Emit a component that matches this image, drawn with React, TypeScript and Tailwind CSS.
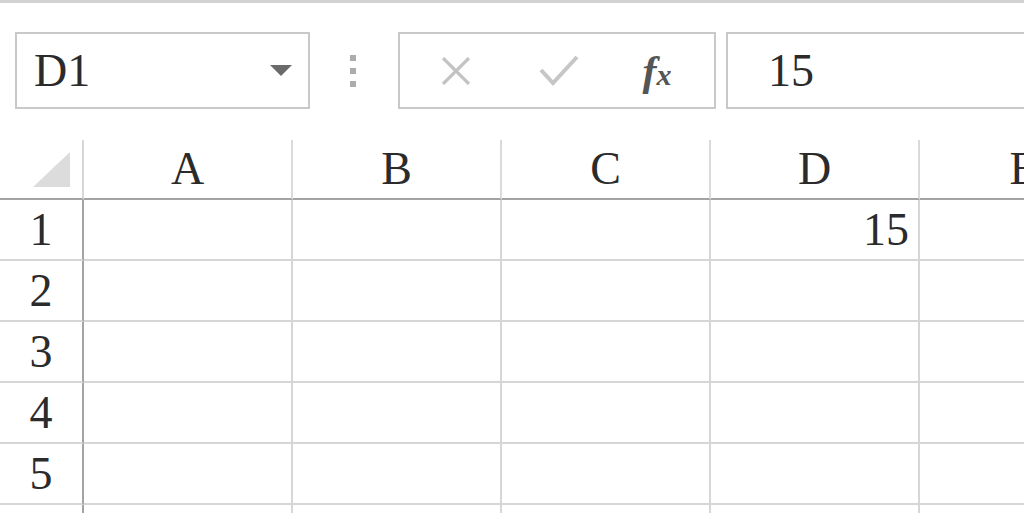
import React from 'react';

const serif = { fontFamily: '"Liberation Serif", "Times New Roman", serif' };

const columns = ['A', 'B', 'C', 'D', 'E'];
const rows = [1, 2, 3, 4, 5, 6];

const values: Record<string, string> = { D1: '15' };

const NameBox = () => (
  <div className="w-[295px] h-[77px] shrink-0 border-2 border-[#c9c9c9] flex items-center pl-[17px] pr-[16px] justify-between">
    <span className="text-[46px] leading-none text-[#2b2b2b]">D1</span>
    <svg width="22" height="11" viewBox="0 0 22 11">
      <polygon points="0,0 22,0 11,11" fill="#6b6b6b" />
    </svg>
  </div>
);

const Grip = () => (
  <div className="w-[88px] h-[77px] shrink-0 flex flex-col items-center justify-center gap-[7px] pr-[2px]">
    <span className="w-[6px] h-[6px] bg-[#acacac]" />
    <span className="w-[6px] h-[6px] bg-[#acacac]" />
    <span className="w-[6px] h-[6px] bg-[#acacac]" />
  </div>
);

const FormulaButtons = () => (
  <div className="w-[318px] h-[77px] shrink-0 border-2 border-[#c9c9c9] flex items-center">
    <div className="w-[105px] flex justify-center pl-[6px]">
      <svg width="30" height="28" viewBox="0 0 30 28">
        <path d="M2 1 L28 27 M28 1 L2 27" stroke="#c3c3c3" strokeWidth="3.2" fill="none" />
      </svg>
    </div>
    <div className="w-[105px] flex justify-center pl-[2px]">
      <svg width="40" height="31" viewBox="0 0 40 31">
        <path d="M2 15 L14 28 L38 2" stroke="#c6c6c6" strokeWidth="4" fill="none" />
      </svg>
    </div>
    <div className="flex-1 flex justify-center pr-[10px]">
      <span className="italic font-bold text-[42px] leading-none text-[#555]">
        f<span className="text-[30px]">x</span>
      </span>
    </div>
  </div>
);

const FormulaInput = () => (
  <div className="w-[420px] h-[77px] shrink-0 border-2 border-[#c9c9c9] flex items-center pl-[40px]">
    <span className="text-[46px] leading-none text-[#2b2b2b]">15</span>
  </div>
);

export default function App() {
  return (
    <div className="w-[1024px] h-[513px] overflow-hidden bg-white" style={serif}>
      <div className="h-[3px] bg-[#d2d2d2]" />

      <div className="h-[137px] pt-[29px] pl-[15px] flex items-start">
        <NameBox />
        <Grip />
        <FormulaButtons />
        <div className="w-[10px] shrink-0" />
        <FormulaInput />
      </div>

      <div className="grid grid-cols-[84px_209px_209px_209px_209px_209px] text-[#2b2b2b]">
        <div className="h-[60px] border-r-2 border-b-2 border-r-[#d6d6d6] border-b-[#a3a3a3] flex items-end justify-end pr-[12px] pb-[11px]">
          <svg width="37" height="35" viewBox="0 0 37 35">
            <polygon points="37,0 37,35 0,35" fill="#dcdcdc" />
          </svg>
        </div>
        {columns.map((c) => (
          <div
            key={c}
            className="h-[60px] border-r-2 border-b-2 border-r-[#dadada] border-b-[#a3a3a3] flex items-center justify-center text-[46px] leading-none"
          >
            {c}
          </div>
        ))}

        {rows.map((r) => (
          <React.Fragment key={r}>
            <div className="h-[61px] border-r-2 border-b-2 border-r-[#a3a3a3] border-b-[#d6d6d6] flex items-center justify-center text-[46px] leading-none">
              {r}
            </div>
            {columns.map((c) => (
              <div
                key={c}
                className="h-[61px] border-r-2 border-b-2 border-[#d6d6d6] flex items-center justify-end pr-[9px] text-[46px] leading-none"
              >
                {values[`${c}${r}`] ?? ''}
              </div>
            ))}
          </React.Fragment>
        ))}
      </div>
    </div>
  );
}
